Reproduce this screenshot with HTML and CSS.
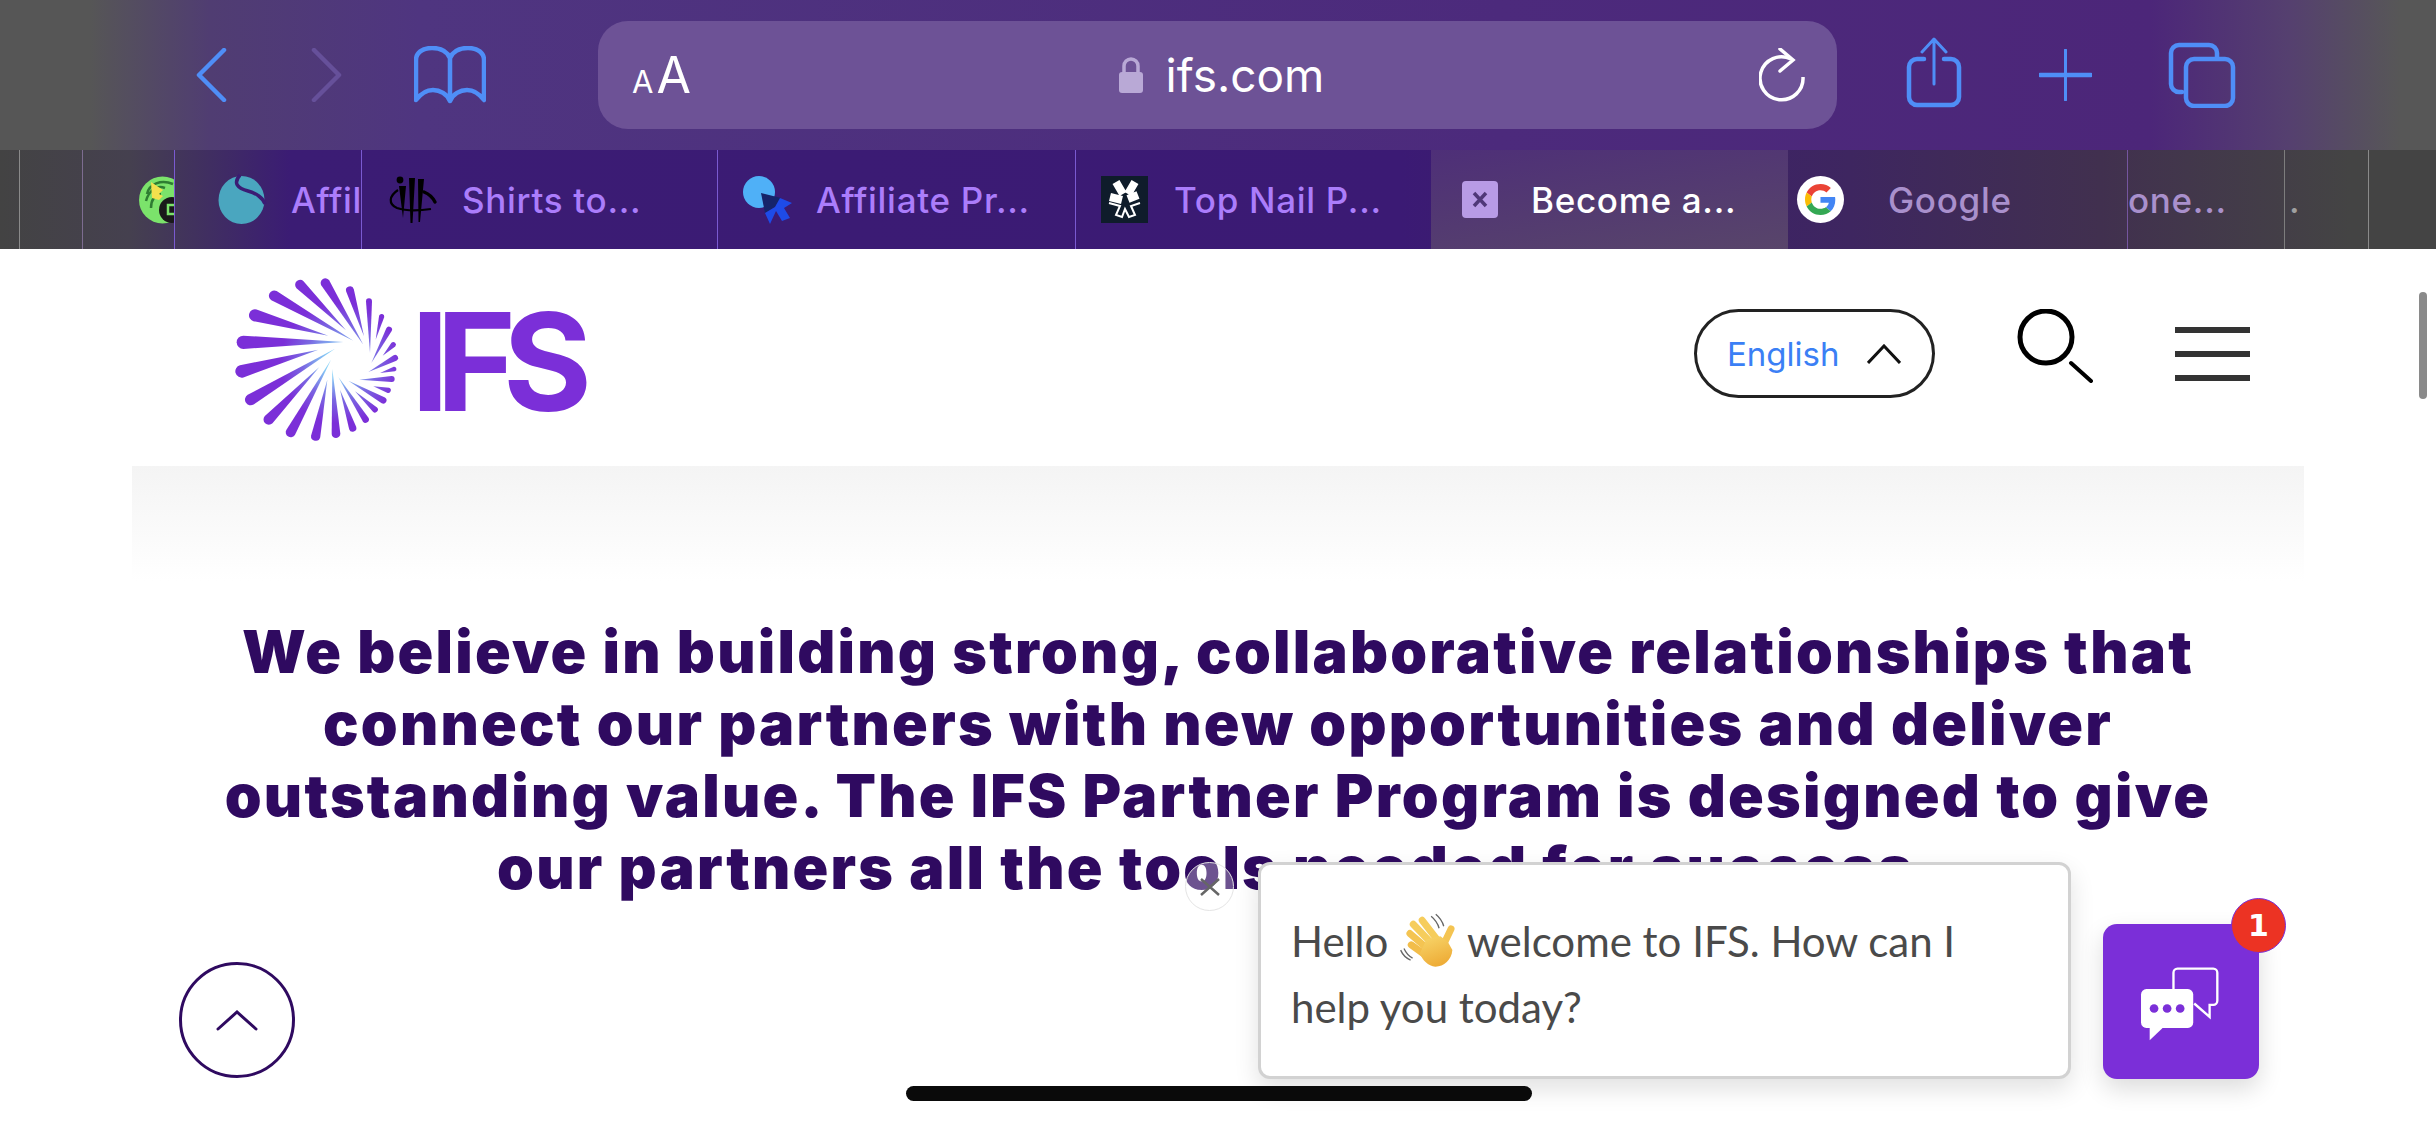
FILE: index.html
```html
<!DOCTYPE html>
<html>
<head>
    <title>Become a Partner - IFS</title>
    <link rel="stylesheet" href="styles.css">
</head>
<body>
    <div class="toolbar">
        <svg class="backIcon" width="31" height="54" viewBox="0 0 31 54"><path d="M28 2 L3 27 L28 52" class="blueLine"/></svg>
        <svg class="forwardIcon" width="31" height="54" viewBox="0 0 31 54"><path d="M3 2 L28 27 L3 52" class="dimLine"/></svg>
        <svg class="bookIcon" width="72" height="58" viewBox="0 0 72 58"><path d="M36 12 C33 5 26 2 18 2 C8 2 2 7 2 14 V54 C8 46 14 44 19 44 C26 44 33 48 36 55 C39 48 46 44 53 44 C58 44 64 46 70 54 V14 C70 7 64 2 54 2 C46 2 39 5 36 12 V55" class="blueLine"/></svg>
        <div class="urlBar">
            <span class="textSize"><span class="smallA">A</span>A</span>
            <span class="address">
                <svg width="26" height="36" viewBox="0 0 26 36"><path d="M6 16 V9 a7 7 0 0 1 14 0 V16" fill="none" stroke="#b9a9d6" stroke-width="3.5"/><rect x="1" y="15" width="24" height="21" rx="3" fill="#b9a9d6"/></svg>
                ifs.com
            </span>
            <svg class="reload" width="46" height="54" viewBox="0 0 46 54"><path d="M32 11 A21.5 21.5 0 1 0 44 29" fill="none" stroke="#fff" stroke-width="3.5"/><path d="M21 1 L34 12 L21 23" fill="none" stroke="#fff" stroke-width="3.5" stroke-linecap="round"/></svg>
        </div>
        <svg class="shareIcon" width="56" height="71" viewBox="0 0 56 71"><path d="M18 22 H11 a8 8 0 0 0 -8 8 V60 a8 8 0 0 0 8 8 H45 a8 8 0 0 0 8 -8 V30 a8 8 0 0 0 -8 -8 H38" class="blueLine"/><path d="M28 47 V3 M16 15 L28 2 L40 15" class="thinBlue"/></svg>
        <svg class="plusIcon" width="53" height="52" viewBox="0 0 53 52"><path d="M1 26 H52" class="blueLine"/><path d="M26.5 1 V51" class="thinBlue"/></svg>
        <svg class="tabsIcon" width="68" height="66" viewBox="0 0 68 66"><path d="M14 50 H11 a8 8 0 0 1 -8 -8 V11 a8 8 0 0 1 8 -8 H41 a8 8 0 0 1 8 8 V16" class="blueLine"/><rect x="18" y="17" width="47" height="47" rx="8" class="blueLine"/></svg>
    </div>

    <div class="tabBar">
        <div class="tab tabA"></div>
        <div class="tab tabB"></div>
        <div class="tab tabC">
            <svg class="favicon" viewBox="0 0 47 47"><circle cx="23.5" cy="24" r="23.5" fill="#7be36b"/><path d="M8 18 C10 8 22 3 34 8 M7 25 C10 14 18 9 26 12 M12 32 C12 24 16 18 22 18" fill="none" stroke="#2e7d32" stroke-width="2.5"/><path d="M12 6 L24 14 L20 18 L24 20 L20 24 L13 22 Z" fill="#f4e04d"/><circle cx="33" cy="34" r="13" fill="#1a1a1a"/><rect x="29" y="29" width="9" height="9" fill="none" stroke="#7be36b" stroke-width="2.5"/></svg>
        </div>
        <div class="tab tabD">
            <svg class="favicon" viewBox="0 0 47 47"><ellipse cx="23.5" cy="24" rx="23" ry="24" fill="#4aa6bf"/><path d="M22 -1 C15 7 19 12 30 15 C38 17 45 22 47 28" fill="none" stroke="#3b1c74" stroke-width="3.5"/></svg>
            <span class="tabTitle">Affil</span>
        </div>
        <div class="tab tabE">
            <svg class="favicon" viewBox="0 0 47 47"><circle cx="11" cy="4" r="3.4"/><path d="M10 10 L17 10 L14 42 Z M20 2 L26 2 L23.5 47 L21.5 47 Z M29 3 L35 3 L31 46 L29.5 46 Z"/><path d="M9 14 C0 20 -1 28 8 32 C17 35 28 35 42 33" fill="none" stroke="#000" stroke-width="2.2"/><path d="M35 16 C40 18 44 22 46 26" fill="none" stroke="#000" stroke-width="3.4" stroke-linecap="round"/></svg>
            <span class="tabTitle">Shirts to...</span>
        </div>
        <div class="tab tabF">
            <svg class="favicon" viewBox="0 0 47 47"><circle cx="16" cy="16" r="16" fill="#4fb0f7"/><path d="M18 17 L38 22 L32 31 L22 37 Z" fill="#16246a"/><path d="M37 22 L49 27 L41 32 L47 42 L39 45 L33 35 L27 48 L22 37 L32 31 Z" fill="#1e4be8"/></svg>
            <span class="tabTitle">Affiliate Pr...</span>
        </div>
        <div class="tab tabG">
            <svg class="favicon" viewBox="0 0 47 47"><rect width="47" height="47" fill="#0f1c2b"/><path d="M15 6 L22 18 M34 6 L27 18 M37 19 L27 23 M21 24 L9 21" fill="none" stroke="#fff" stroke-width="8"/><path d="M8 27 L19 30 L15 39 L21 41 L24 33 L28 41 L34 39 L30 30 L39 27" fill="none" stroke="#fff" stroke-width="2"/></svg>
            <span class="tabTitle">Top Nail P...</span>
        </div>
        <div class="tab tabActive">
            <svg class="favicon smallIcon" viewBox="0 0 36 37"><rect width="36" height="37" rx="4" fill="#b89be6"/><path d="M12 12 L24 25 M24 12 L12 25" stroke="#4f3878" stroke-width="3.5"/></svg>
            <span class="tabTitle">Become a...</span>
        </div>
        <div class="tab tabH">
            <svg class="favicon" viewBox="0 0 47 47">
                <circle cx="23.5" cy="23.5" r="23.5" fill="#fff"/>
                <g transform="translate(8 8) scale(.645)">
                    <path fill="#EA4335" d="M24 9.5c3.54 0 6.71 1.22 9.21 3.6l6.85-6.85C35.9 2.38 30.47 0 24 0 14.62 0 6.51 5.38 2.56 13.22l7.98 6.19C12.43 13.72 17.74 9.5 24 9.5z"/>
                    <path fill="#4285F4" d="M46.98 24.55c0-1.57-.15-3.09-.38-4.55H24v9.02h12.94c-.58 2.96-2.26 5.48-4.78 7.18l7.73 6c4.51-4.18 7.09-10.36 7.09-17.65z"/>
                    <path fill="#FBBC05" d="M10.53 28.59c-.48-1.45-.76-2.99-.76-4.59s.27-3.14.76-4.59l-7.98-6.19C.92 16.46 0 20.12 0 24c0 3.88.92 7.54 2.56 10.78l7.97-6.19z"/>
                    <path fill="#34A853" d="M24 48c6.48 0 11.93-2.13 15.89-5.81l-7.73-6c-2.15 1.45-4.92 2.3-8.16 2.3-6.26 0-11.57-4.22-13.47-9.91l-7.98 6.19C6.51 42.62 14.62 48 24 48z"/>
                </g>
            </svg>
            <span class="tabTitle">Google</span>
        </div>
        <div class="tab tabI"><span class="tabTitle">one...</span></div>
        <div class="tab tabJ"><span class="tabTitle">.</span></div>
        <div class="tab tabK"></div>
    </div>

    <header class="siteHeader">
        <svg class="swirl" width="164" height="164" viewBox="105 55 492 492">
            <defs>
                <radialGradient id="swirlFill" gradientUnits="userSpaceOnUse" cx="420" cy="310" r="290">
                    <stop offset="0.15" stop-color="#86d0f6"/>
                    <stop offset="0.38" stop-color="#7a68e2"/>
                    <stop offset="0.62" stop-color="#7b2fd8"/>
                </radialGradient>
            </defs>
            <g fill="url(#swirlFill)">
                <path d="M289.4 85.6 A15 15 0 0 1 310.6 64.4 L438 212Z"/>
                <path d="M364.1 77.4 A14 14 0 0 1 387.9 62.6 L490 255Z"/>
                <path d="M438.5 95.5 A12 12 0 0 1 461.5 88.5 L492 230Z"/>
                <path d="M498 125.2 A9 9 0 0 1 516 124.8 L510 280Z"/>
                <path d="M537.3 168 A8 8 0 0 1 552.7 172 L527 240Z"/>
                <path d="M559 205.8 A9 9 0 0 1 575 214.2 L514 310Z"/>
                <path d="M574.3 249.4 A8 8 0 0 1 585.7 260.6 L548 288Z"/>
                <path d="M580.8 287 A9 9 0 0 1 589.2 303 L505 337Z"/>
                <path d="M581.1 321.3 A7 7 0 0 1 584.9 334.7 L540 340Z"/>
                <path d="M574.8 349 A9 9 0 0 1 575.2 367 L478 360Z"/>
                <path d="M567.1 384.3 A8 8 0 0 1 562.9 399.7 L520 380Z"/>
                <path d="M554.9 413.3 A10 10 0 0 1 545.1 430.7 L445 363Z"/>
                <path d="M531.1 443.4 A9 9 0 0 1 518.9 456.6 L465 395Z"/>
                <path d="M505.4 474.6 A10 10 0 0 1 488.6 485.4 L415 352Z"/>
                <path d="M468.5 501.5 A11 11 0 0 1 447.5 508.5 L420 390Z"/>
                <path d="M421 521.3 A13 13 0 0 1 395 522.7 L397 328Z"/>
                <path d="M360.7 532.8 A14 14 0 0 1 333.3 527.2 L382 360Z"/>
                <path d="M285.1 525.3 A15 15 0 0 1 258.9 510.7 L393 300Z"/>
                <path d="M217.5 491.1 A16 16 0 0 1 194.5 468.9 L358 322Z"/>
                <path d="M160.8 434.6 A17 17 0 0 1 143.2 405.4 L405 267Z"/>
                <path d="M130.2 353.3 A19 19 0 0 1 119.8 316.7 L355 270Z"/>
                <path d="M130 268 A20 20 0 0 1 130 228 L430 247Z"/>
                <path d="M160.2 184.4 A18 18 0 0 1 169.8 149.6 L385 228Z"/>
                <path d="M214.1 121.9 A16 16 0 0 1 229.9 94.1 L460 243Z"/>
            </g>
        </svg>
        <span class="wordmark">IFS</span>
        <div class="language">
            <span>English</span>
            <svg width="34" height="20" viewBox="0 0 34 20"><path d="M1 19 L17 2 L33 19" fill="none" stroke="#111" stroke-width="3"/></svg>
        </div>
        <svg class="searchIcon" width="76" height="74" viewBox="0 0 76 74"><circle cx="29" cy="28" r="26" fill="none" stroke="#000" stroke-width="5"/><path d="M54 54 L74 72" stroke="#000" stroke-width="4" stroke-linecap="round"/></svg>
        <div class="menuIcon"><span></span><span></span><span></span></div>
    </header>

    <div class="fadeBand"></div>

    <h1 class="intro">We believe in building strong, collaborative relationships that<br>connect our partners with new opportunities and deliver<br>outstanding value. The IFS Partner Program is designed to give<br>our partners all the tools needed for success.</h1>

    <div class="scrollBar"></div>

    <div class="toTop">
        <svg width="42" height="21" viewBox="0 0 42 21"><path d="M2 19 L21 2 L40 19" fill="none" stroke="#2f0a60" stroke-width="3" stroke-linecap="round"/></svg>
    </div>

    <div class="chatClose">
        <svg width="20" height="18" viewBox="0 0 20 18"><path d="M1 1 L19 17 M19 1 L1 17" stroke="#666" stroke-width="2.5"/></svg>
    </div>

    <div class="chatBubble">
        Hello <svg class="wave" viewBox="25 35 175 175">
            <defs>
                <linearGradient id="waveFill" x1="0" y1="0" x2="0.4" y2="1">
                    <stop offset="0" stop-color="#f8d76c"/>
                    <stop offset="1" stop-color="#eead38"/>
                </linearGradient>
            </defs>
            <path d="M122 48 C134 58 142 70 146 84 M136 42 C148 52 156 64 160 78 M30 150 C36 164 46 174 60 180 M40 145 C46 158 54 168 66 174" fill="none" stroke="#666" stroke-width="4"/>
            <g stroke-width="21" stroke-linecap="round" fill="none">
                <path d="M95 60 L140 118" stroke="#f6cd5c"/>
                <path d="M68 72 L122 128" stroke="#f6cd5c"/>
                <path d="M58 100 L112 146" stroke="#f4c452"/>
                <path d="M62 134 L106 166" stroke="#f2bd4a"/>
                <path d="M182 86 L160 132" stroke="#f4c452"/>
            </g>
            <path d="M108 118 L150 108 L172 125 L186 150 C184 180 160 200 135 200 C112 198 96 180 88 160 Z" fill="url(#waveFill)"/>
        </svg> welcome to IFS. How can I<br>help you today?
    </div>

    <div class="chatButton">
        <svg width="82" height="77" viewBox="30 225 245 230">
            <path d="M133 298 V248 a12 12 0 0 1 12 -12 H252 a12 12 0 0 1 12 12 V332 a12 12 0 0 1 -12 12 H241 V380 L195 340" fill="none" stroke="#fff" stroke-width="7"/>
            <rect x="36" y="297" width="156" height="116" rx="16" fill="#fff"/>
            <path d="M62 408 V450 L106 408 Z" fill="#fff"/>
            <circle cx="75" cy="355" r="13" fill="#7b2fd8"/>
            <circle cx="114" cy="355" r="13" fill="#7b2fd8"/>
            <circle cx="153" cy="355" r="13" fill="#7b2fd8"/>
        </svg>
    </div>
    <div class="chatBadge">1</div>

    <div class="homeBar"></div>
</body>
</html>
```

FILE: styles.css
```css
* {
    box-sizing: border-box;
}

body {
    margin: 0;
    width: 2436px;
    height: 1125px;
    overflow: hidden;
    position: relative;
    background-color: white;
    font-family: Inter, sans-serif;
}

.blueLine {
    fill: none;
    stroke: #4f8ef7;
    stroke-width: 4.5;
    stroke-linecap: round;
    stroke-linejoin: round;
}

.thinBlue {
    fill: none;
    stroke: #4f8ef7;
    stroke-width: 3;
    stroke-linecap: round;
    stroke-linejoin: round;
}

.dimLine {
    fill: none;
    stroke: #66509a;
    stroke-width: 4.5;
    stroke-linecap: round;
    stroke-linejoin: round;
}

/* browser chrome */
.toolbar {
    height: 150px;
    display: flex;
    align-items: center;
    padding-left: 196px;
    background: linear-gradient(90deg, #565656 0, #565656 90px, #503d72 210px, #4f3580 420px, #4c2a7c 1500px, #4c2679 2150px, #55406f 2290px, #575757 2400px);
}

.forwardIcon {
    margin-left: 84px;
}

.bookIcon {
    margin-left: 72px;
}

.urlBar {
    width: 1239px;
    height: 108px;
    margin-left: 112px;
    padding: 0 32px 0 34px;
    border-radius: 30px;
    background-color: #6d5296;
    display: grid;
    grid-template-columns: 1fr auto 1fr;
    align-items: center;
    color: white;
}

.textSize {
    font-size: 50px;
    line-height: 1;
}

.smallA {
    font-size: 31px;
    margin-right: 3px;
}

.address {
    display: flex;
    align-items: center;
    gap: 22px;
    font-size: 46px;
    margin-left: 5px;
}

.reload {
    justify-self: end;
}

.shareIcon {
    margin-left: 69px;
    margin-top: -5px;
}

.plusIcon {
    margin-left: 77px;
}

.tabsIcon {
    margin-left: 76px;
}

.tabBar {
    height: 99px;
    display: flex;
    background: linear-gradient(90deg, #434343 0, #45404f 130px, #3b1c74 290px, #3b1a74 1400px, #3e2660 1850px, #41304f 2100px, #444444 2350px);
}

.tab {
    height: 100%;
    display: flex;
    align-items: center;
    flex: none;
    overflow: hidden;
    white-space: nowrap;
    border-left: 1px solid #75569f;
    font-size: 35px;
    font-weight: 500;
    letter-spacing: 0.7px;
    color: #ab7dfb;
}

.favicon {
    width: 47px;
    height: 47px;
    flex: none;
    overflow: visible;
}

.smallIcon {
    width: 36px;
    height: 37px;
}

.tabTitle {
    margin-left: 26px;
}

.tabA {
    width: 19px;
    border-left: none;
}

.tabB {
    width: 63px;
    border-left-color: #8a8a8a;
}

.tabC {
    width: 92px;
    padding-left: 56px;
    border-left-color: #7d6c90;
}

.tabD {
    width: 187px;
    padding-left: 43px;
    border-left-color: #7a5ad0;
}

.tabE {
    width: 356px;
    padding-left: 27px;
    border-left-color: #7a5ad0;
}

.tabF {
    width: 358px;
    padding-left: 25px;
    border-left-color: #7a5ad0;
}

.tabG {
    width: 356px;
    padding-left: 25px;
    border-left-color: #7a5ad0;
}

.tabActive {
    width: 357px;
    padding-left: 31px;
    border-left: none;
    color: white;
    background: linear-gradient(170deg, #4e2f78, #58456a);
}

.tabActive .tabTitle {
    margin-left: 33px;
}

.tabH {
    width: 339px;
    padding-left: 9px;
    border-left: none;
    color: #a990cc;
}

.tabH .tabTitle {
    margin-left: 44px;
}

.tabI {
    width: 157px;
    color: #a990cc;
}

.tabI .tabTitle {
    margin-left: 0;
}

.tabJ {
    width: 84px;
    color: #a0a0a0;
    border-left-color: #7d7d7d;
}

.tabJ .tabTitle {
    margin-left: 4px;
}

.tabK {
    width: 68px;
    border-left-color: #8a8a8a;
}

/* site header */
.siteHeader {
    height: 217px;
    display: flex;
    align-items: flex-start;
    padding: 0 186px 0 235px;
}

.swirl {
    margin-top: 29px;
    flex: none;
}

.wordmark {
    margin: 45px 0 0 12px;
    font-size: 136px;
    line-height: 1;
    font-weight: 700;
    letter-spacing: -13px;
    color: #7b2fd8;
}

.language {
    margin: 60px 0 0 auto;
    width: 241px;
    height: 89px;
    border: 3px solid #222;
    border-radius: 45px;
    display: flex;
    align-items: center;
    gap: 27px;
    padding-left: 30px;
    font-size: 33px;
    color: #3b7ff5;
}

.searchIcon {
    margin: 60px 0 0 82px;
}

.menuIcon {
    margin: 78px 0 0 82px;
    width: 75px;
    display: flex;
    flex-direction: column;
    gap: 18px;
}

.menuIcon span {
    height: 6px;
    background-color: #333;
}

.fadeBand {
    height: 115px;
    margin: 0 132px;
    background: linear-gradient(#f4f4f4, #ffffff);
}

.intro {
    margin: 35px 0 0;
    text-align: center;
    font-size: 59px;
    line-height: 72px;
    font-weight: 900;
    letter-spacing: 2.25px;
    color: #2f0a60;
}

/* things floating over the page */
.scrollBar {
    position: absolute;
    left: 2419px;
    top: 292px;
    width: 8px;
    height: 107px;
    border-radius: 4px;
    background-color: #8a8a8a;
}

.toTop {
    position: absolute;
    left: 179px;
    top: 962px;
    width: 116px;
    height: 116px;
    border: 3px solid #2f0a60;
    border-radius: 50%;
    background-color: white;
    display: flex;
    align-items: center;
    justify-content: center;
}

.chatClose {
    position: absolute;
    left: 1185px;
    top: 862px;
    width: 49px;
    height: 49px;
    border: 1px solid #e4e4e4;
    border-radius: 50%;
    background-color: rgba(255, 255, 255, 0.3);
    display: flex;
    align-items: center;
    justify-content: center;
}

.chatBubble {
    position: absolute;
    left: 1258px;
    top: 862px;
    width: 813px;
    height: 217px;
    padding: 43px 0 0 30px;
    background-color: white;
    border: 3px solid #d2d2d2;
    border-radius: 12px;
    box-shadow: 0 10px 24px rgba(0, 0, 0, 0.12);
    font-family: Lato, sans-serif;
    font-size: 42px;
    line-height: 66px;
    color: #4a4a4a;
}

.wave {
    width: 58px;
    height: 58px;
    vertical-align: -13px;
}

.chatButton {
    position: absolute;
    left: 2103px;
    top: 924px;
    width: 156px;
    height: 155px;
    padding: 41px 0 0 36px;
    border-radius: 14px;
    background-color: #7b2fd8;
    box-shadow: 0 10px 24px rgba(0, 0, 0, 0.14);
}

.chatBadge {
    position: absolute;
    left: 2231px;
    top: 898px;
    width: 55px;
    height: 55px;
    border: 1px solid #7b2fd8;
    border-radius: 50%;
    background-color: #ec3323;
    color: white;
    display: flex;
    align-items: center;
    justify-content: center;
    font-family: "DejaVu Sans", sans-serif;
    font-size: 30px;
    font-weight: 700;
}

.homeBar {
    position: absolute;
    left: 906px;
    top: 1086px;
    width: 626px;
    height: 15px;
    border-radius: 8px;
    background-color: #0a0a0a;
}
```
